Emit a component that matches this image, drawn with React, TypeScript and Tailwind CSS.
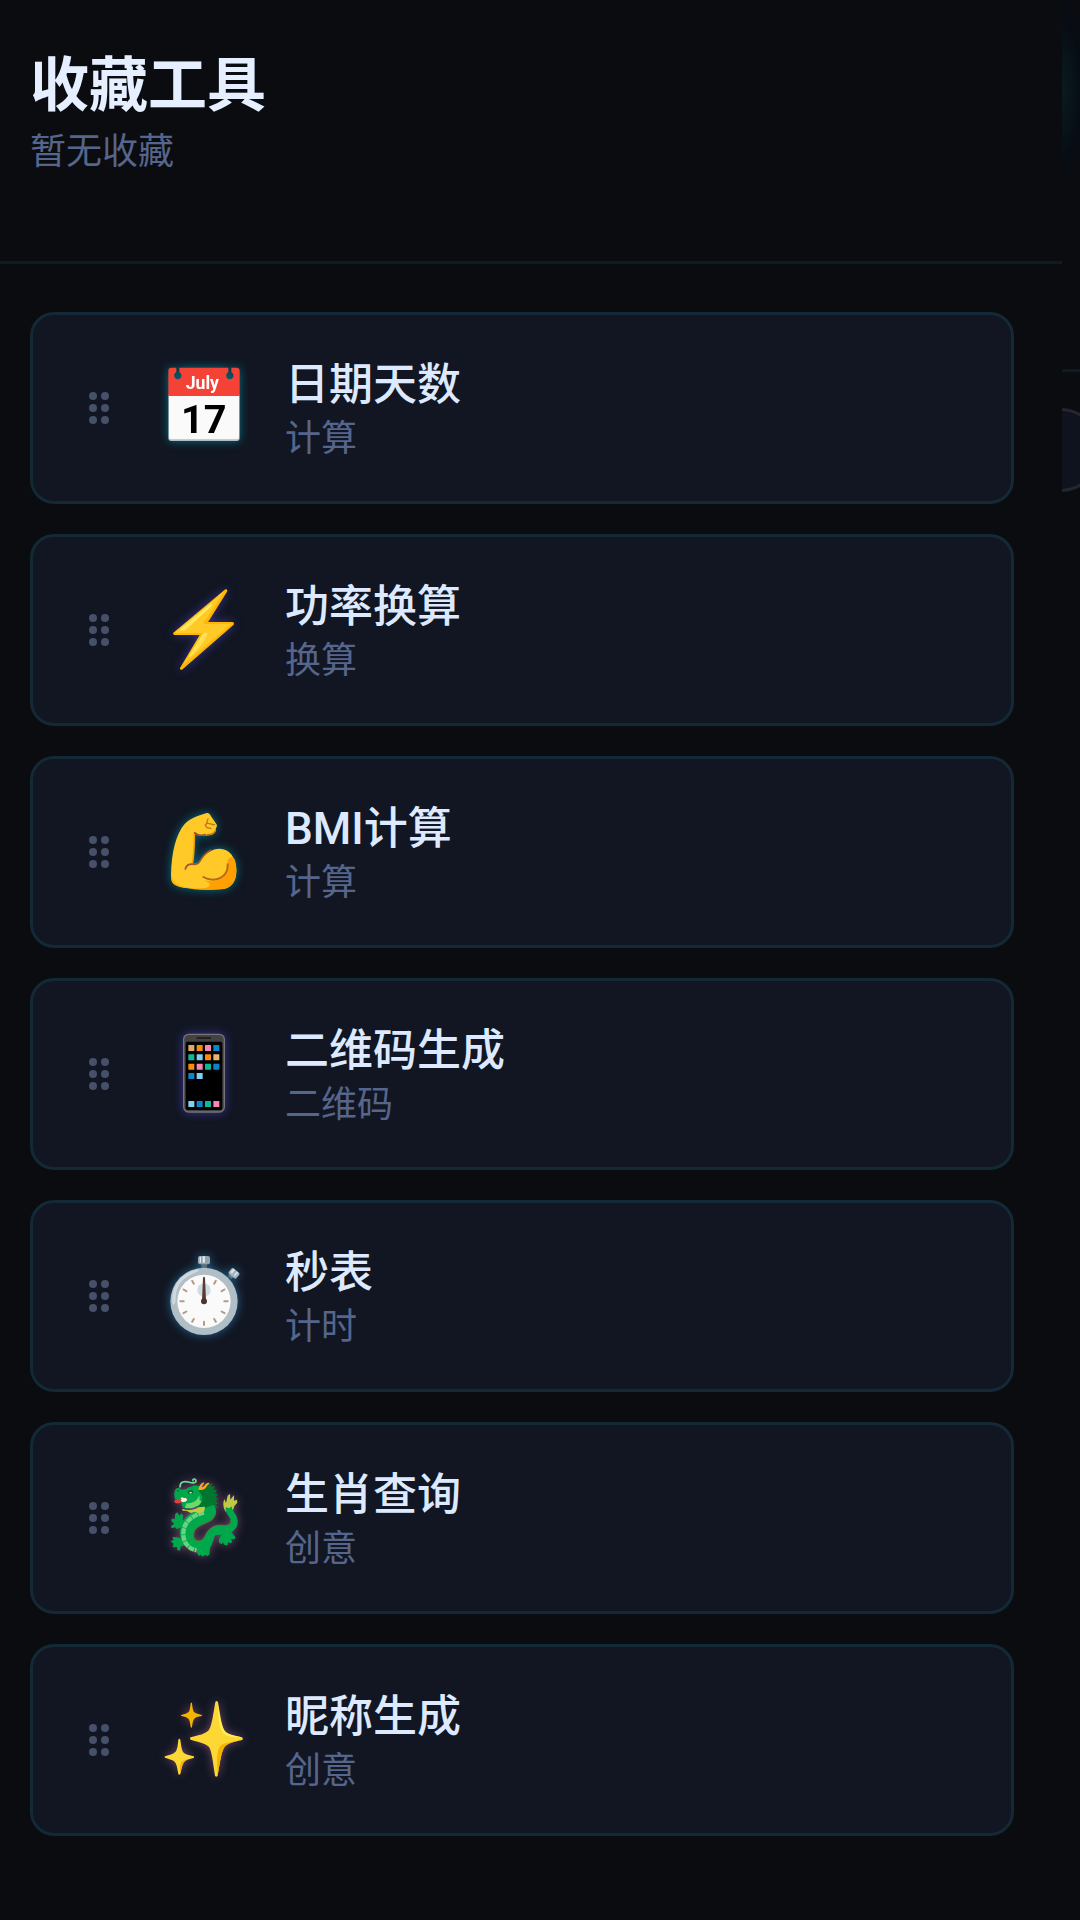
import type { ReactNode } from 'react'

interface Tool {
  name: string
  category: string
  glow: string
  icon: ReactNode
}

function CalendarIcon() {
  return (
    <svg viewBox="57 69 270 270" className="size-full" aria-hidden="true">
      <path d="M85 165h214v129q0 9-9 9H94q-9 0-9-9z" fill="#b0bec5" />
      <path d="M87 165h210v126q0 7-8 7H95q-8 0-8-7z" fill="#fafafa" />
      <path d="M94 83h15v14a11 11 0 1 0 9 0V83h147v14a11 11 0 1 0 9 0V83h16q9 0 9 9v76H85V92q0-9 9-9z" fill="#f44336" />
      <text x="187" y="146" textAnchor="middle" fontFamily="Roboto" fontWeight="700" fontSize="53" fill="#ffffff">July</text>
      <text x="191" y="278" textAnchor="middle" fontFamily="Roboto" fontWeight="700" fontSize="119" fill="#000000">17</text>
    </svg>
  )
}

function BoltIcon() {
  return (
    <svg viewBox="57 75 270 270" className="size-full" aria-hidden="true">
      <path d="M256 88 100 218q-3 7 4 7h75l-59 99q-1 7 6 5L281 194q3-8-5-8h-72l58-92q1-8-6-6z" fill="#feb804" />
      <path d="M253 93 106 216q-2 3 2 3h84l-64 97 146-124h-82z" fill="#ffc927" />
      <path d="m213 131-91 75q-4 6 5 6 8 0 12-4l72-66q8-8 2-11z" fill="#ffe95c" />
      <path d="m188 221-40 65q-3 8 5 3 32-29 48-63 4-12-13-5z" fill="#ffe253" />
      <path d="m204 186 52-84-65 83q-4 7 13 1z" fill="#ffb300" opacity=".6" />
    </svg>
  )
}

function BicepsIcon() {
  return (
    <svg viewBox="57 51 270 270" className="size-full" aria-hidden="true">
      <path d="M198 70c7-3 12 1 15 9l14 20c5 6 5 10 1 15-1 3-1 5-1 9-2 8-9 12-22 13-16 3-31 1-41-8-2 21-1 57-6 93 9 2 16-1 21-8 17-23 37-37 60-37 29 1 47 23 50 61 2 36-14 60-49 61-38 3-93-1-122-8-20-5-25-17-25-37 2-67 15-121 41-151 17-16 38-25 64-32z" fill="#ffca28" />
      <path d="M289 234c1 40-13 63-49 64-27 2-63 1-89-2 31-1 51 0 57-8 5-8-7-13-16-18 34 12 68-4 72-37 1-20-8-27 12-32 9 3 11 14 13 33z" fill="#ffa000" />
      <path d="M163 128c-1 20 1 54-6 93" fill="none" stroke="#ffa000" strokeWidth="5" />
      <path d="M94 242c0 37 15 47 70 53-42-1-68-8-70-25z" fill="#ffb300" />
      <path d="M164 128c8 9 20 9 32 6M136 237c3-12 14-16 27-14 22 1 15-26 49-42" fill="none" stroke="#9a5834" strokeWidth="5" strokeLinecap="round" />
      <path d="M190 261c37 21 75-1 73-38" fill="none" stroke="#b86820" strokeWidth="6" strokeLinecap="round" />
      <path d="M204 87c-4 8-1 11-8 18 3 10 9 10 17 10M200 101c9-4 13 5 24 3M225 124c-6 9-13 10-23 10" fill="none" stroke="#c27717" strokeWidth="4" strokeLinecap="round" />
    </svg>
  )
}

// App tiles on the phone's screen: x, y, colour
const phoneTiles: [number, number, string][] = [
  [145, 105, '#e2a966'], [170, 105, '#f78c0a'], [195, 105, '#f488b3'], [220, 105, '#0a85cc'],
  [145, 133, '#0eb798'], [170, 133, '#82cff5'], [195, 133, '#f78c0a'], [220, 133, '#e2b577'],
  [145, 161, '#f78c0a'], [170, 161, '#f488b3'], [195, 161, '#0eb798'], [220, 161, '#0a85cc'],
  [145, 189, '#0a85cc'], [170, 189, '#82cff5'],
  [145, 273, '#82cff5'], [170, 273, '#0a85cc'], [195, 273, '#0eb798'], [220, 273, '#f488b3'],
]

function PhoneIcon() {
  return (
    <svg viewBox="57 57 270 270" className="size-full" aria-hidden="true">
      <rect x="129" y="71" width="126" height="237" rx="17" fill="#757575" />
      <rect x="133" y="75" width="118" height="229" rx="13" fill="#424242" />
      <rect x="137" y="95" width="110" height="205" rx="6" fill="#000000" />
      <rect x="170" y="81" width="43" height="6" rx="1" fill="#212121" />
      {phoneTiles.map(([x, y, fill]) => (
        <rect key={`${x}-${y}`} x={x} y={y} width="18" height="18" rx="1" fill={fill} />
      ))}
    </svg>
  )
}

const ticks = [30, 60, 90, 120, 150, 180, 210, 240, 270, 300, 330]

function StopwatchIcon() {
  return (
    <svg viewBox="57 63 270 270" className="size-full" aria-hidden="true">
      <path d="M184 99h17v19h-17z" fill="#546e7a" />
      <rect x="174" y="78" width="36" height="25" rx="6" fill="#90a4ae" />
      <path d="M179 80h4v18h-4zm9-1h7v19h-7z" fill="#e0e6e9" />
      <path d="m264 137 12-13 10 9-12 14z" fill="#607d8b" />
      <g transform="rotate(40 282 130)">
        <rect x="267" y="119" width="30" height="22" rx="5" fill="#a2b2ba" />
        <path d="M271 120h7v15h-7zm14 0h5v15h-5z" fill="#dce4e7" />
      </g>
      <circle cx="192" cy="214" r="101" fill="#b0bec5" />
      <path d="M98 223c-7-58 27-97 79-105-1 9-14 11-27 18-33 17-43 43-43 75-1 12-7 16-9 12z" fill="#cfd8dc" />
      <circle cx="192" cy="214" r="80" fill="#fafafa" />
      <circle cx="192" cy="180" r="20" fill="#cfdde2" />
      {ticks.map((deg) => (
        <path key={deg} d="M192 143v10" transform={`rotate(${deg} 192 214)`} stroke="#b39b86" strokeWidth="6" strokeLinecap="round" />
      ))}
      <path d="M189 143q3-6 6 0l3 68h-12z" fill="#5d3a30" />
      <circle cx="192" cy="214" r="9" fill="#4e342e" />
    </svg>
  )
}

function DragonIcon() {
  return (
    <svg viewBox="57 69 270 270" className="size-full" aria-hidden="true">
      {/* mane */}
      <path d="m174 124 23-13 20-13-4 12 12-1-6 10 12 1-7 9 10 5-8 6 9 8-9 3 9 10-9 2 8 11-10-1 6 9-13-1-18 10-29-8z" fill="#00762f" />
      {/* tail tuft */}
      <path d="M256 184c-7-13-8-25-3-37l5 12 5-22 7-6 1 18 11-14v17l9-3 1 9-9 10-5 16-10 8z" fill="#c0ca45" />
      {/* hind foot */}
      <path d="m243 256-7 13 2 10 8 4 2-6 6 8 9 1 1-9 8 3 5-5-5-8 12 1 2-7-13-16z" fill="#00a84c" />
      {/* body */}
      <path d="M222 164c9 16 9 36-8 48-24 14-54 18-54 42 0 22 24 26 34 6 10-22 26-38 54-34 16 2 26-3 24-16-2-12-20-22-14-40 4 5 11 6 18-1-2 14 16 24 17 43 1 20-9 30-22 36-16 7-35 6-46 8-5 16-8 28-15 38l-2 20-7 4-6-4-7 6-5-6-7 3-5-9v-7c-33-4-52-26-51-55 2-31 20-57 58-66z" fill="#00a84c" />
      <path d="M226 189c-4 34-62 26-66 65 0 22 24 26 34 6 10-22 26-38 54-34 16 2 26-3 24-16" fill="none" stroke="#527d3c" strokeWidth="3" />
      {/* front claws */}
      <path d="m135 230-17 4-8 3-4-5-11 3-2-7 10-7-9-8 1-7 10 1 0-14 7-6 6 10 7-7 5 8-2 11 11 7zM148 293l-16-7-10 4-2 12-8-2-1-9-13 1 3-11-9-7 9-4-4-9 14 1 14 4 18 11z" fill="#00a84c" />
      {/* belly plates */}
      <path d="M192 188c-38 8-60 29-62 60-1 29 15 49 40 53" fill="none" stroke="#66d481" strokeWidth="13" strokeDasharray="18 2" />
      {/* head */}
      <path d="M105 121c4-10 14-8 18-2l15-1c7-8 19-6 22-12l20 2-4 17c11 5 14 24 7 35-10 13-31 19-54 14l-7-20-17-6c-3-12-3-19 0-27z" fill="#00a84c" />
      <path d="M139 160c15 1 28-4 34-15l6-9-1 13 6 6-7 11-22 9-20-1z" fill="#72d66f" />
      <path d="M126 176c17 6 35 5 49-4l20-2-2 14-15 6-14-4-12 3-11-6-13-1z" fill="#c0ca45" />
      <path d="M142 125c6-6 15-5 18 0l-3 7-11-1z" fill="#09672c" />
      <path d="M149 126h6v4h-6z" fill="#e0f2e6" />
      <path d="M110 122c4-5 9-1 7 4z" fill="#006331" />
      <path d="M144 148c-9-7-18-4-27 0-6 3-11 1-14 4-2 6 6 9 14 8l13-6z" fill="#e53b45" />
      <path d="m121 145 6-3 6 3 4-2 5 7-6 5-9 1-5-4 3-4z" fill="#fff3e0" />
      <path d="M120 111c0-16 13-19 28-14 12 4 21 1 20-6-2-6-11-5-9 1" fill="none" stroke="#72d597" strokeWidth="5" strokeLinecap="round" />
      <path d="M175 119c3-10 6-19 17-22 3 4-6 8-6 15 8-1 9-14 20-14 6 3-2 5-5 10-6 10-12 14-26 11z" fill="#fba719" />
    </svg>
  )
}

function SparklesIcon() {
  return (
    <svg viewBox="57 75 270 270" className="size-full" aria-hidden="true">
      <path d="M226 96q4-6 8 0c7 43 12 77 21 88 8 10 24 12 51 18q5 4 0 8c-29 6-46 11-53 22-9 13-13 45-20 85q-4 6-8 0c-7-46-10-78-20-88-9-9-26-12-53-20q-4-4 0-7c25-6 44-10 54-21 9-12 13-43 20-85z" fill="#fdd835" />
      <path d="M233 96c5 44 12 76 22 88 8 9 25 13 51 18-28 1-48-3-57-13-11-12-15-49-16-93z" fill="#ffee58" />
      <path d="M306 210c-29 6-46 11-53 22-9 13-13 45-20 85-4-46-2-75 7-88 11-11 36-14 66-19z" fill="#f4b400" />
      <path d="M115 209q3-5 6 0c3 22 5 35 11 40 5 4 15 6 29 10q3 2 0 5c-14 3-23 6-28 11-6 7-8 19-12 37q-3 4-6 0c-3-18-5-30-11-37-5-5-16-8-29-12q-3-2 0-4c14-4 24-7 30-12s8-17 10-38z" fill="#fdd835" />
      <path d="M161 264c-14 3-23 6-28 11-6 7-8 19-12 37-1-20-1-31 5-38 6-5 19-7 35-10z" fill="#f4b400" />
      <path d="M152 100q2-5 4 0c2 16 3 24 7 27 4 4 12 5 22 8q3 1 0 3c-11 2-18 3-22 8-4 4-5 12-7 25q-2 4-4 0c-2-13-3-21-7-25-5-5-11-6-21-8q-3-2 0-3c10-3 17-4 21-8 4-3 5-12 7-27z" fill="#f4b400" />
    </svg>
  )
}

const tools: Tool[] = [
  { name: '日期天数', category: '计算', glow: 'drop-shadow-[0_0_5px_#00c8dc80]', icon: <CalendarIcon /> },
  { name: '功率换算', category: '换算', glow: 'drop-shadow-[0_0_5px_#6450ff80]', icon: <BoltIcon /> },
  { name: 'BMI计算', category: '计算', glow: 'drop-shadow-[0_0_5px_#00c8dc80]', icon: <BicepsIcon /> },
  { name: '二维码生成', category: '二维码', glow: 'drop-shadow-[0_0_5px_#6450ff80]', icon: <PhoneIcon /> },
  { name: '秒表', category: '计时', glow: 'drop-shadow-[0_0_5px_#3cb4ff80]', icon: <StopwatchIcon /> },
  { name: '生肖查询', category: '创意', glow: 'drop-shadow-[0_0_5px_#d87cb480]', icon: <DragonIcon /> },
  { name: '昵称生成', category: '创意', glow: 'drop-shadow-[0_0_5px_#d87cb480]', icon: <SparklesIcon /> },
]

function DragHandle({ label }: { label: string }) {
  return (
    <button type="button" aria-label={label} className="mr-[50px] grid shrink-0 cursor-grab grid-cols-2 gap-1">
      {[0, 1, 2, 3, 4, 5].map((dot) => (
        <span key={dot} className="size-2 rounded-full bg-[#465069]" />
      ))}
    </button>
  )
}

function ToolCard({ tool }: { tool: Tool }) {
  return (
    <li className="flex h-48 items-center rounded-3xl border-3 border-[#132936] bg-[#111622] px-14">
      <DragHandle label={tool.name} />
      <div className={`mr-9 size-[90px] shrink-0 ${tool.glow}`}>{tool.icon}</div>
      <div className="min-w-0 flex-1 pt-0.5">
        <h2 className="text-[44px] leading-15 font-medium text-[#dce9ff]">{tool.name}</h2>
        <p className="text-4xl leading-12 text-[#56658c]">{tool.category}</p>
      </div>
    </li>
  )
}

// Sliver of the page that stays visible beside the drawer
function PageEdge() {
  return (
    <div className="w-[18px] shrink-0 overflow-hidden" aria-hidden="true">
      <div className="h-[369px] bg-[radial-gradient(ellipse_28px_100px_at_0px_90px,#0a1b20,#070c14_70%,transparent)]" />
      <div className="h-[3px] bg-[#0b1d24]" />
      <div className="mt-9 -ml-11 size-[84px] rounded-full border-3 border-[#24262f] bg-[#0e131d]" />
    </div>
  )
}

export default function App() {
  return (
    <div className="flex min-h-screen bg-[#0a0c10] font-[Roboto,'Noto_Sans_CJK_SC',sans-serif]">
      <main className="min-w-0 flex-1">
        <header className="border-b-3 border-[#0d1c22] px-[30px] pt-[50px] pb-[79px]">
          <h1 className="text-[59px] leading-18 font-bold text-[#e6efff]">收藏工具</h1>
          <p className="text-4xl leading-15 text-[#56658c]">暂无收藏</p>
        </header>
        <ul className="flex flex-col gap-[30px] pt-12 pr-12 pb-20 pl-[30px]">
          {tools.map((tool) => (
            <ToolCard key={tool.name} tool={tool} />
          ))}
        </ul>
      </main>
      <PageEdge />
    </div>
  )
}
